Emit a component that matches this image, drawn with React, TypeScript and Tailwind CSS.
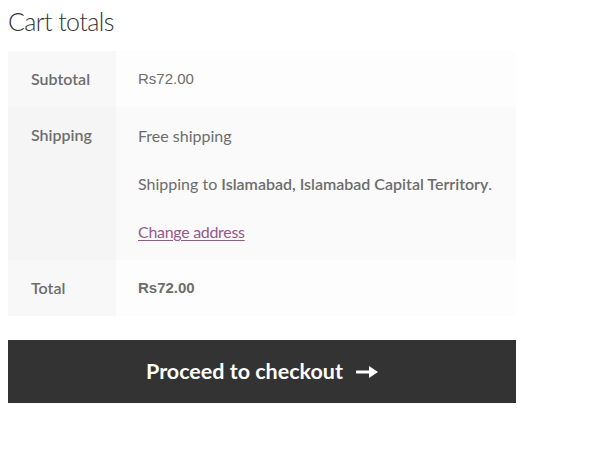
import React from "react";

export default function App() {
  const label = "w-[108px] shrink-0 px-[23px] py-4 font-semibold text-[#6d6d6d] leading-6";
  return (
    <div className="w-[589px] h-[471px] bg-white pl-2 pt-[4px] font-['Lato','Liberation_Sans',sans-serif] text-[16px] text-[#6d6d6d]">
      <h2 className="text-[25px] font-light leading-[34px] text-[#333333] tracking-[-0.6px]">Cart totals</h2>
      <div className="mt-[13px] w-[508px] flex flex-col">
        <div className="flex h-[56px]">
          <div className={label + " bg-[#f8f8f8]"}>Subtotal</div>
          <div className="flex-1 bg-[#fdfdfd] px-[22px] py-4 leading-6 font-['Liberation_Sans',Arial,sans-serif] text-[15px] text-[#6d6d6d]">Rs72.00</div>
        </div>
        <div className="flex">
          <div className={label + " bg-[#f5f5f5]"}>Shipping</div>
          <div className="flex-1 bg-[#fafafa] px-[22px] pt-[17px] pb-4 leading-6 flex flex-col gap-6">
            <div>Free shipping</div>
            <div>
              Shipping to <span className="font-semibold">Islamabad, Islamabad Capital Territory</span>.
            </div>
            <div>
              <a className="text-[#96588a] underline underline-offset-2 tracking-[-0.3px]">Change address</a>
            </div>
          </div>
        </div>
        <div className="flex h-[56px]">
          <div className={label + " bg-[#f8f8f8]"}>Total</div>
          <div className="flex-1 bg-[#fdfdfd] px-[22px] py-4 leading-6 font-['Liberation_Sans',Arial,sans-serif] font-bold text-[15px] text-[#6d6d6d]">Rs72.00</div>
        </div>
      </div>
      <div className="mt-6 w-[508px] h-[63px] bg-[#333333] flex items-center justify-center gap-[13px] text-white font-bold text-[21.5px]">
        <span>Proceed to checkout</span>
        <svg width="22" height="12" viewBox="0 0 22 12" fill="white">
          <rect x="0" y="4.5" width="15" height="3" />
          <polygon points="13,0 22,6 13,12" />
        </svg>
      </div>
    </div>
  );
}
